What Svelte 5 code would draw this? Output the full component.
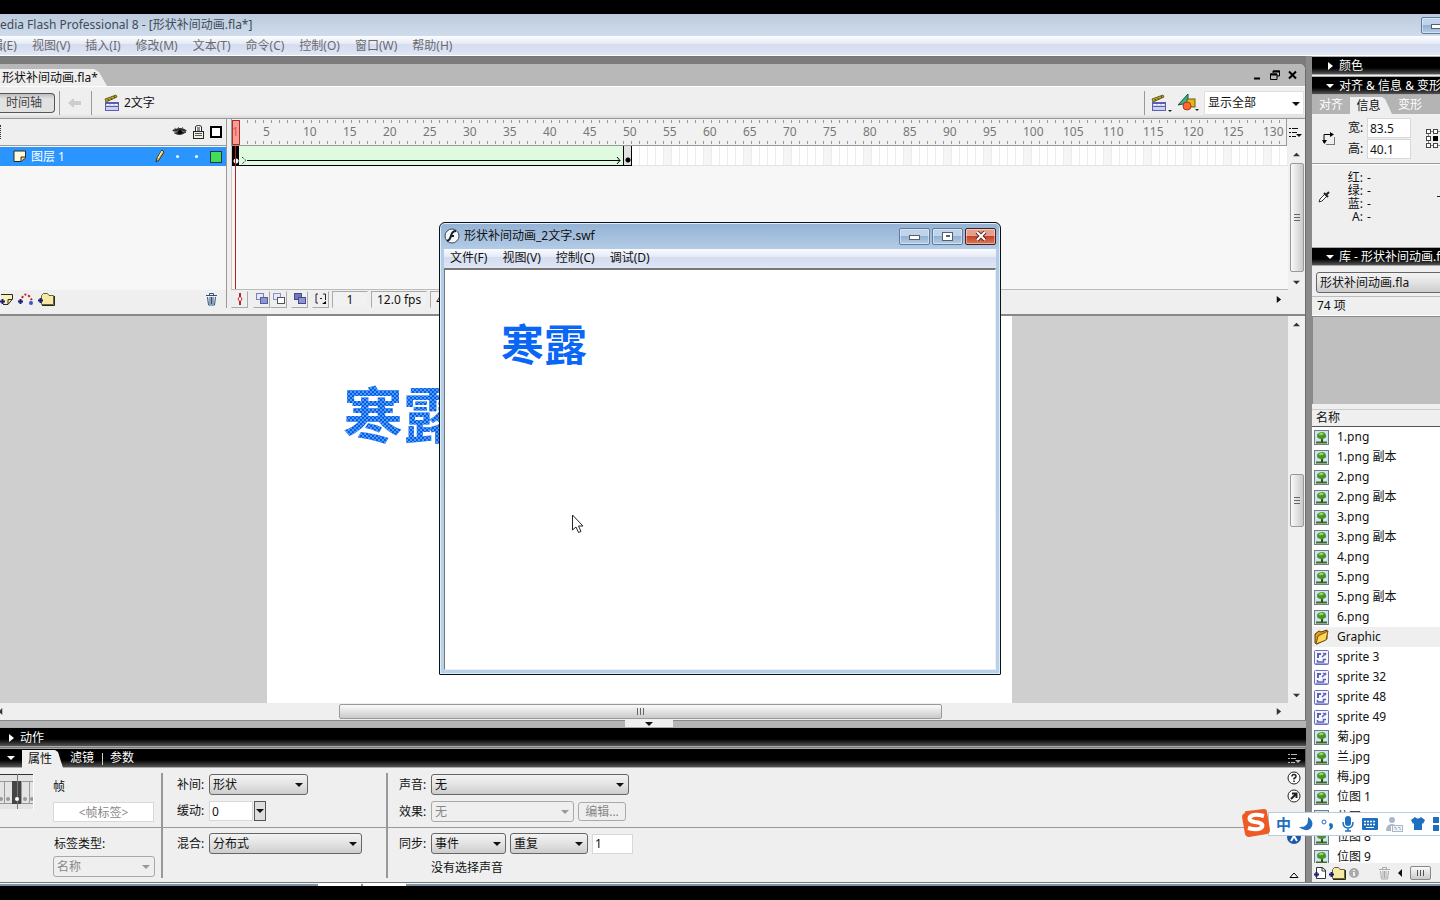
<!-- Flash authoring workspace: timeline, stage, property inspector and library,
     with the test-movie window floating over the stage. -->
<script lang="ts">
  const menus = ["辑(E)", "视图(V)", "插入(I)", "修改(M)", "文本(T)", "命令(C)", "控制(O)", "窗口(W)", "帮助(H)"];
  const movieMenus = ["文件(F)", "视图(V)", "控制(C)", "调试(D)"];
  const rulerMarks = Array.from({ length: 26 }, (_, i) => (i + 1) * 5);

  type Item = { name: string; kind: "bitmap" | "folder" | "graphic" };
  const bitmap = (name: string): Item => ({ name, kind: "bitmap" });
  const graphic = (name: string): Item => ({ name, kind: "graphic" });

  const items: Item[] = [
    ...["1.png", "1.png 副本", "2.png", "2.png 副本", "3.png", "3.png 副本", "4.png", "5.png", "5.png 副本", "6.png"].map(bitmap),
    { name: "Graphic", kind: "folder" },
    ...["sprite 3", "sprite 32", "sprite 48", "sprite 49"].map(graphic),
    ...["菊.jpg", "兰.jpg", "梅.jpg", "位图 1", "位图 7", "位图 8", "位图 9"].map(bitmap),
  ];

  const channels = ["红:", "绿:", "蓝:", "A:"];

  let frameLabel = $state("<帧标签>");
  let ease = $state("0");
  let loops = $state("1");
  let objWidth = $state("83.5");
  let objHeight = $state("40.1");
</script>

{#snippet tri(dir: string)}
  <svg class="tri" width="8" height="8" viewBox="0 0 8 8" aria-hidden="true">
    {#if dir === "up"}<path d="M0 6L4 2L8 6Z" />
    {:else if dir === "down"}<path d="M0 2L4 6L8 2Z" />
    {:else if dir === "left"}<path d="M6 0L2 4L6 8Z" />
    {:else}<path d="M2 0L7 4L2 8Z" />{/if}
  </svg>
{/snippet}

{#snippet clapper()}
  <svg width="16" height="18" viewBox="0 0 16 18" aria-hidden="true">
    <path d="M1 5L12 1L13 3L2 8Z" fill="#b5a32a" stroke="#6b641f" />
    <path d="M4 5l1 2M7 4l1 2M10 2l1 2" stroke="#4d4818" />
    <rect x="1.500" y="8.500" width="13" height="8" fill="#cdd2f3" stroke="#5a5fae" />
    <path d="M1 9.500H15M1 12.500H15" stroke="#5a5fae" />
    <path d="M3 10.500h2M7 10.500h2M11 10.500h2" stroke="#fff" />
  </svg>
{/snippet}

{#snippet listIcon()}
  <svg width="13" height="11" viewBox="0 0 13 11" aria-hidden="true">
    <path d="M0 1.500h2M0 5.500h2M0 9.500h2M3 1.500h6M3 5.500h5M3 9.500h4" stroke="currentColor" />
    <path d="M7 7h6l-3 3z" fill="currentColor" />
  </svg>
{/snippet}

{#snippet plus()}
  <path d="M0 8.500h5M2.500 6v5" stroke="#1d1f7c" stroke-width="2" />
{/snippet}

{#snippet folder()}
  <svg width="17" height="14" viewBox="0 0 17 14" aria-hidden="true">
    <path d="M3.500 12.500V3.500L5.500 1.500H9.500L11 3.500H15.500V12.500Z" fill="#f6e9a4" stroke="#6b6238" />
    <path d="M4 13.500H16.500V4" fill="none" stroke="#2a2717" />
    {@render plus()}
  </svg>
{/snippet}

{#snippet trash()}
  <svg width="13" height="14" viewBox="0 0 13 14" aria-hidden="true">
    <path d="M1 3.500H12M4.500 3V1.500H8.500V3M2.500 5L3.500 13H9.500L10.500 5M5 5V12M6.500 5V12M8 5V12" fill="none" stroke="currentColor" />
  </svg>
{/snippet}

<div class="screen">
  <header class="titlebar">
    <h1>edia Flash Professional 8 - [形状补间动画.fla*]</h1>
    <button class="aero main-min" aria-label="最小化"><i class="dash"></i></button>
  </header>
  <nav class="menubar">
    {#each menus as menu}<button>{menu}</button>{/each}
  </nav>

  <div class="workspace">
    <main class="left">
      <section class="document">
        <div class="doc-tabs">
          <button class="doc-tab">形状补间动画.fla*</button>
          <div class="doc-buttons">
            <button aria-label="最小化文档"><svg width="9" height="10" viewBox="0 0 9 10"><path d="M1 8.500H7" stroke="#000" stroke-width="2" /></svg></button>
            <button aria-label="还原文档"><svg width="10" height="10" viewBox="0 0 10 10"><path d="M3 3V1H9.500V6H7M.5 4H7V9.500H.5Z" fill="none" stroke="#000" /><path d="M3 1.500H10M0 4.500H7" stroke="#000" stroke-width="2" /></svg></button>
            <button aria-label="关闭文档"><svg width="9" height="10" viewBox="0 0 9 10"><path d="M1 1.500L8 8.500M8 1.500L1 8.500" stroke="#000" stroke-width="2" /></svg></button>
          </div>
        </div>

        <div class="scene-bar">
          <button class="timeline-toggle">时间轴</button>
          <i class="bar-sep"></i>
          <button class="back" aria-label="返回" disabled>
            <svg width="14" height="12" viewBox="0 0 14 12"><path d="M0 6L6 1V4H13V8H6V11Z" fill="#ccc" /></svg>
          </button>
          <i class="bar-sep"></i>
          <span class="scene-name">{@render clapper()}2文字</span>
          <div class="scene-tools">
            <i class="bar-sep"></i>
            <button aria-label="编辑场景">{@render clapper()}<i class="mini"></i></button>
            <button aria-label="编辑元件">
              <svg width="18" height="17" viewBox="0 0 18 17"><path d="M0 11L10 0V9Z" fill="#35b38e" stroke="#17583f" /><rect x="9" y="5" width="8" height="8" fill="#e3b71b" stroke="#6e5a10" /><circle cx="9" cy="12" r="4" fill="#ff6a32" stroke="#a93a12" /></svg><i class="mini"></i>
            </button>
            <div class="drop zoom">
              <select aria-label="缩放"><option>显示全部</option></select>
            </div>
          </div>
        </div>

        <div class="timeline">
          <div class="layers">
            <div class="layer-head">
              <i class="grip"></i>
              <svg width="15" height="10" viewBox="0 0 15 10"><path d="M0 4C3 1 11 -1 15 4L13 4C15 5 14 6 13 6C9 9 4 8 2 6L5 5Z" fill="#2b2b2b" /><path d="M1 3L4 1M6 1L7 0M10 1L11 0M2 6Q7 2 13 5" stroke="#777" fill="none" /><circle cx="8" cy="5" r="2" /></svg>
              <svg width="11" height="14" viewBox="0 0 11 14"><path d="M2.500 6V2Q2.500 .5 5.500 .5T8.500 2V6" fill="#fff" stroke="#222" /><path d="M4 3h3M4 5h3" stroke="#222" /><rect x=".5" y="6.500" width="10" height="7" fill="#f2f2d6" stroke="#222" /><path d="M2 8.500h7M2 10.500h7" stroke="#458" /></svg>
              <i class="outline-box"></i>
            </div>
            <div class="layer">
              <svg class="layer-icon" width="14" height="13" viewBox="0 0 14 13"><path d="M1 1H12.500V8L8 11.500H1Z" fill="#fffbe0" stroke="#2c2a1c" /><path d="M12.500 7H8V11.500" fill="#e7cf72" stroke="#2c2a1c" /></svg>
              <span>图层 1</span>
              <svg class="pencil" width="10" height="15" viewBox="0 0 10 15"><path d="M1 13L2 9L7 1L9 3L4 11Z" fill="#f0c64c" stroke="#3d3013" /><path d="M3 9L7 2" stroke="#fff8cf" /></svg>
              <b></b><b></b>
              <i class="swatch"></i>
            </div>
            <div class="layer-foot">
              <button aria-label="插入图层"><svg width="14" height="13" viewBox="0 0 14 13"><path d="M1 1.500H12.500V6L8 11.500H3" fill="#f9efb9" stroke="#2c2a1c" /><path d="M12 6.500H8V11" fill="none" stroke="#2c2a1c" />{@render plus()}</svg></button>
              <button aria-label="添加运动引导层"><svg width="16" height="13" viewBox="0 0 16 13"><path d="M4 5Q7 -1 11 3T13 10" fill="none" stroke="#c22127" stroke-width="2" stroke-dasharray="2 2" /><circle cx="13" cy="10" r="2" fill="#3058c8" />{@render plus()}</svg></button>
              <button aria-label="插入图层文件夹">{@render folder()}</button>
              <button class="delete" aria-label="删除图层">{@render trash()}</button>
            </div>
          </div>

          <div class="frames">
            <div class="ruler-row">
              <div class="ruler">
                <span class="first">1</span>
                {#each rulerMarks as mark}<span>{mark}</span>{/each}
                <i class="playhead"></i>
              </div>
              <button class="list-btn" aria-label="帧视图">{@render listIcon()}</button>
            </div>
            <div class="track-area">
              <div class="tracks">
                <div class="track">
                  <i class="key-start"></i>
                  <div class="tween">
                    <svg class="tail" width="5" height="7" viewBox="0 0 5 7"><path d="M0 0L4 3.500L0 7" fill="none" stroke="#000" stroke-dasharray="1 1" /></svg>
                    <i class="shaft"></i>
                    <svg class="tail" width="5" height="7" viewBox="0 0 5 7"><path d="M1 0L4 3.500L1 7" fill="none" stroke="#000" /></svg>
                  </div>
                  <i class="key-end"></i>
                  <div class="empty-frames"></div>
                </div>
                <i class="playline"></i>
              </div>
              <div class="vscroll">
                {@render tri("up")}
                <i class="vthumb timeline-thumb"></i>
                {@render tri("down")}
              </div>
            </div>
            <div class="frame-foot">
              <button aria-label="帧居中"><svg width="8" height="14" viewBox="0 0 8 14"><path d="M4 1V13" stroke="#c22127" stroke-width="2" /><path d="M4 4L6 7L4 10L2 7Z" fill="#fff" stroke="#c22127" /></svg></button>
              <button class="g1" aria-label="绘图纸外观"><svg width="12" height="12" viewBox="0 0 12 12"><rect x=".5" y=".5" width="7" height="6" fill="#e6e8fb" stroke="#7a7fb8" /><rect x="4.500" y="4.500" width="7" height="6" fill="#8f95d2" stroke="#555a9c" /></svg></button>
              <button aria-label="绘图纸外观轮廓"><svg width="12" height="12" viewBox="0 0 12 12"><rect x=".5" y=".5" width="7" height="6" fill="#e6e8fb" stroke="#8f93c0" /><rect x="4.500" y="4.500" width="7" height="6" fill="#fff" stroke="#555" /></svg></button>
              <button class="g2" aria-label="编辑多个帧"><svg width="12" height="12" viewBox="0 0 12 12"><rect x=".5" y=".5" width="7" height="6" fill="#7278bd" stroke="#454a8c" /><rect x="4.500" y="4.500" width="7" height="6" fill="#8f95d2" stroke="#454a8c" /></svg></button>
              <button class="g2" aria-label="修改绘图纸标记"><svg width="12" height="12" viewBox="0 0 12 12"><path d="M3 1H1V10H3M8 1H10.500V7M5 5.500H7" fill="none" stroke="#222" /><path d="M11 8V11H7Z" /></svg></button>
              <span class="cell frame-no">1</span>
              <span class="cell">12.0 fps</span>
              <span class="cell time">4.1s</span>
              <div class="frame-scroll">{@render tri("right")}</div>
            </div>
          </div>
        </div>

        <div class="stage-row">
          <div class="pasteboard">
            <div class="stage"><span class="shape-text">寒露</span></div>
          </div>
          <div class="vscroll">
            {@render tri("up")}
            <i class="vthumb stage-thumb"></i>
            {@render tri("down")}
          </div>
        </div>
        <div class="hscroll">
          {@render tri("left")}
          <i class="hthumb"></i>
          {@render tri("right")}
        </div>
      </section>

      <div class="splitter"><button aria-label="折叠面板">{@render tri("down")}</button></div>

      <div class="panel-bar actions-bar">{@render tri("right")}<span>动作</span></div>

      <section class="properties">
        <div class="panel-bar prop-bar">
          {@render tri("down")}
          <button class="prop-tab">属性</button>
          <button>滤镜</button>
          <i></i>
          <button>参数</button>
          <span class="prop-menu">{@render listIcon()}</span>
        </div>
        <div class="prop-body">
          <div class="prop-cell frame-cell">
            <svg width="34" height="36" viewBox="0 0 34 36" aria-hidden="true">
              <rect width="33" height="35" fill="#e4e4e4" /><path d="M0 .5H33" stroke="#333" />
              <path d="M0 7.500H33M0 29.500H33M4.500 7V30M21.500 7V30M29.500 7V30" stroke="#999" />
              <rect x="12" y="7" width="9" height="23" fill="#444" /><path d="M17.500 0V35" stroke="#777" />
              <g fill="#999"><circle cx="1" cy="25" r="2" /><circle cx="8" cy="25" r="2" /><circle cx="25" cy="25" r="2" /><circle cx="32" cy="25" r="2" /></g><circle cx="17" cy="25" r="2" fill="#fff" />
              <path d="M33.500 0V36" stroke="#fff" />
            </svg>
            <div class="stack">
              <label for="frame-label">帧</label>
              <input id="frame-label" class="frame-label" bind:value={frameLabel} />
            </div>
          </div>
          <div class="prop-cell tween-cell">
            <div class="line">
              <label for="tween">补间:</label>
              <div class="drop w98"><select id="tween"><option>形状</option></select></div>
            </div>
            <div class="line">
              <label for="ease">缓动:</label>
              <input id="ease" class="ease" bind:value={ease} />
              <button class="step" aria-label="缓动滑块">{@render tri("down")}</button>
            </div>
          </div>
          <div class="prop-cell sound-cell">
            <div class="line">
              <label for="sound">声音:</label>
              <div class="drop w198"><select id="sound"><option>无</option></select></div>
            </div>
            <div class="line">
              <label for="effect">效果:</label>
              <div class="drop off w143"><select id="effect" disabled><option>无</option></select></div>
              <button class="edit" disabled>编辑...</button>
            </div>
          </div>
          <div class="prop-cell type-cell">
            <label for="label-type">标签类型:</label>
            <div class="drop off w102"><select id="label-type" disabled><option>名称</option></select></div>
          </div>
          <div class="prop-cell tween-cell">
            <div class="line">
              <label for="blend">混合:</label>
              <div class="drop w153"><select id="blend"><option>分布式</option></select></div>
            </div>
          </div>
          <div class="prop-cell sound-cell">
            <div class="line">
              <label for="sync">同步:</label>
              <div class="drop w75"><select id="sync"><option>事件</option></select></div>
              <div class="drop w78"><select aria-label="循环方式"><option>重复</option></select></div>
              <input class="loops" aria-label="循环次数" bind:value={loops} />
            </div>
            <p>没有选择声音</p>
          </div>
          <div class="prop-icons">
            <svg width="14" height="14" viewBox="0 0 14 14"><circle cx="7" cy="7" r="6" fill="#fff" stroke="#222" /><path d="M5 5.500Q5 3.500 7 3.500T9 5.500Q9 6.500 7 7.500V8.500M7 9.500V11" fill="none" stroke="#222" stroke-width="1.500" /></svg>
            <svg width="14" height="14" viewBox="0 0 14 14"><circle cx="7" cy="7" r="6" fill="#fff" stroke="#222" /><path d="M4 10L9 5M5 4.500H9.500V9" fill="none" stroke="#222" stroke-width="2" /></svg>
            <svg class="a11y" width="14" height="14" viewBox="0 0 14 14"><circle cx="7" cy="7" r="7" fill="#1c58a8" /><path d="M4 11L7 6L10 11M3 5H11" fill="none" stroke="#fff" stroke-width="2" /></svg>
            <svg class="expand" width="10" height="6" viewBox="0 0 10 6"><path d="M1 5.500L5 1L9 5.500Z" fill="#fff" stroke="#000" /></svg>
          </div>
        </div>
      </section>
    </main>

    <aside class="right">
      <div class="panel-bar dock-bar first-bar">{@render tri("right")}<span>颜色</span></div>
      <div class="panel-bar dock-bar">{@render tri("down")}<span>对齐 &amp; 信息 &amp; 变形</span></div>
      <div class="info-tabs">
        <button>对齐</button><button class="on">信息</button><button>变形</button>
      </div>
      <div class="info-size">
        <svg width="14" height="15" viewBox="0 0 14 15" aria-hidden="true"><path d="M2 12V3.500H10" fill="none" stroke="#000" /><path d="M0 9H5L2.500 13ZM8 1V6L12 3.500Z" /><path d="M4.500 13.500H12.500V6" fill="none" stroke="#000" stroke-dasharray="1 1" /></svg>
        <div class="fields">
          <label for="obj-w">宽:</label><input id="obj-w" bind:value={objWidth} />
          <label for="obj-h">高:</label><input id="obj-h" bind:value={objHeight} />
        </div>
        <svg class="anchor" width="20" height="20" viewBox="0 0 20 20" aria-hidden="true"><path d="M4 2.500H16M4 16.500H16M2.500 4V16" stroke="#888" /><g fill="#fff" stroke="#444"><rect x=".5" y=".5" width="4" height="4" /><rect x="7.500" y=".5" width="4" height="4" /><rect x="14.500" y=".5" width="4" height="4" /><rect x=".5" y="7.500" width="4" height="4" /><rect x=".5" y="14.500" width="4" height="4" /><rect x="7.500" y="14.500" width="4" height="4" /><rect x="14.500" y="14.500" width="4" height="4" /></g><rect x="7" y="7" width="5" height="5" /></svg>
      </div>
      <div class="info-color">
        <svg width="12" height="12" viewBox="0 0 12 12" aria-hidden="true"><path d="M1 11L2 8L7 3L9 5L4 10Z" fill="#fff" stroke="#333" /><path d="M6 2L10 6M8 4L11 1" stroke="#222" stroke-width="2" /></svg>
        <dl>
          {#each channels as channel}<dt>{channel}</dt><dd>-</dd>{/each}
        </dl>
        <svg class="cross" width="9" height="9" viewBox="0 0 9 9" aria-hidden="true"><path d="M0 4.500H9M4.500 0V9" stroke="#222" /></svg>
      </div>
      <div class="panel-bar dock-bar">{@render tri("down")}<span>库 - 形状补间动画.fla</span></div>
      <div class="lib-select"><div class="drop"><select aria-label="库文件"><option>形状补间动画.fla</option></select></div></div>
      <div class="lib-count">74 项</div>
      <div class="preview"></div>
      <div class="lib-head">名称</div>
      <ul class="lib-list">
        {#each items as item}
          <li class:selected={item.kind === "folder"}>
            {#if item.kind === "bitmap"}
              <svg width="15" height="15" viewBox="0 0 15 15"><rect x=".5" y=".5" width="14" height="14" fill="#cfe5f3" stroke="#6f7d86" /><path d="M2 12.500H13" stroke="#3f6e1e" stroke-width="2" /><path d="M7 8H9V12H7Z" fill="#4b3d18" /><path d="M3 6Q3 3 6 2.500Q10 1 11.500 4Q13 7 11 8L8 9.500L5 8.500Q3 8 3 6Z" fill="#4b9426" /><path d="M5.500 5Q7 3 9 4.500" stroke="#a4d86c" stroke-width="2" fill="none" /></svg>
            {:else if item.kind === "folder"}
              <svg width="15" height="16" viewBox="0 0 15 16"><path d="M1 5L5 2L7 3L13 1V10L3 15L1 14Z" fill="#e09a1e" stroke="#5e3e0c" /><path d="M4 7L14 2L12 11L2 15Z" fill="#ffd75a" stroke="#7a5210" /></svg>
            {:else}
              <svg width="15" height="15" viewBox="0 0 15 15"><rect x=".5" y=".5" width="14" height="14" rx="1" fill="#f4f5ff" stroke="#6a6fc0" /><path d="M3 3H7V5H5V8H3Z" fill="#5c61b4" /><path d="M9 3L12 5M12 3L8 7" stroke="#5c61b4" stroke-width="1.500" /><path d="M3.500 10V12H9.500V9.500H12" fill="none" stroke="#5c61b4" stroke-width="1.500" /><path d="M1 13.500H14" stroke="#9da1dd" /></svg>
            {/if}
            <span>{item.name}</span>
          </li>
        {/each}
      </ul>
      <div class="lib-foot">
        <button aria-label="新建元件"><svg width="12" height="13" viewBox="0 0 12 13"><path d="M2.500 1.500H8L11.500 4V12.500H2.500Z" fill="#fff" stroke="#333" /><path d="M8 1V5H11" fill="none" stroke="#333" />{@render plus()}</svg></button>
        <button aria-label="新建文件夹">{@render folder()}</button>
        <button aria-label="属性" disabled><svg width="10" height="12" viewBox="0 0 10 12"><circle cx="5" cy="6" r="5" fill="#aaa" /><path d="M5 5V9M5 3V4" stroke="#eee" stroke-width="2" /></svg></button>
        <button class="lib-trash" aria-label="删除" disabled>{@render trash()}</button>
        {@render tri("left")}
        <i class="lib-thumb"></i>
      </div>
    </aside>
  </div>
  <footer class="taskbar"><i></i><i></i></footer>

  <section class="movie">
    <header class="movie-title">
      <svg width="16" height="16" viewBox="0 0 16 16" aria-hidden="true"><circle cx="8" cy="8" r="7" fill="#f4f6f8" stroke="#3b4856" /><path d="M12 3Q8 3 7 8Q6 12 3 13M6 8H10" fill="none" stroke="#16202e" stroke-width="2" /></svg>
      <h2>形状补间动画_2文字.swf</h2>
      <button class="aero" aria-label="最小化"><i class="dash"></i></button>
      <button class="aero" aria-label="最大化"><i class="box"></i></button>
      <button class="aero close" aria-label="关闭"><svg width="12" height="10" viewBox="0 0 12 10"><path d="M2 1L10 9M10 1L2 9" stroke="#5a2a26" stroke-width="4" /><path d="M2 1L10 9M10 1L2 9" stroke="#fff" stroke-width="2" /></svg></button>
    </header>
    <nav class="movie-menu">
      {#each movieMenus as menu}<button>{menu}</button>{/each}
    </nav>
    <div class="movie-stage">
      <span>寒露</span>
      <svg class="cursor" width="12" height="20" viewBox="0 0 12 20" aria-hidden="true"><path d="M.5 1V16L4 13L6.500 18.500L9 17.500L6.500 12H11Z" fill="#fff" stroke="#222" /></svg>
    </div>
  </section>

  <div class="ime">
    <svg class="sogou" width="28" height="28" viewBox="0 0 28 28" aria-hidden="true"><path d="M3 4Q2 2 5 2L22 0Q25 0 25 3L28 21Q28 24 25 25L7 28Q4 28 3 25L0 8Q0 5 3 4Z" fill="#ee5a24" /><path d="M22 7Q11 4 8 8Q6 12 13 13Q22 14 20 18Q17 22 6 19" fill="none" stroke="#fff" stroke-width="4" /></svg>
    <button class="zh">中</button>
    <button aria-label="半角"><svg width="14" height="14" viewBox="0 0 14 14"><path d="M9 0Q16 5 12 11Q7 16 0 10Q10 11 9 0Z" /></svg></button>
    <button aria-label="标点"><svg width="13" height="14" viewBox="0 0 13 14"><circle cx="3" cy="5" r="2" fill="none" stroke="#1e6fc0" /><path d="M9 6Q12 6 12 9T8 13L9 10Q7 8 9 6Z" /></svg></button>
    <button aria-label="语音"><svg width="12" height="16" viewBox="0 0 12 16"><rect x="3" y="0" width="6" height="10" rx="3" /><path d="M1 6Q1 12 6 12T11 6M6 12V15M3 15H9" fill="none" stroke="#1e6fc0" stroke-width="1.500" /></svg></button>
    <button aria-label="软键盘"><svg width="16" height="13" viewBox="0 0 16 13"><rect width="16" height="12" rx="1" /><path d="M2 3.500H14M2 6.500H14" stroke="#fff" stroke-width="1.500" stroke-dasharray="2 1" /><path d="M4 9.500H12" stroke="#fff" /></svg></button>
    <button aria-label="账号"><svg width="17" height="15" viewBox="0 0 17 15"><g fill="#a9b9c8"><circle cx="6" cy="3" r="3" /><path d="M0 14Q0 7 6 7Q9 7 10 9H5V14Z" /></g><rect x="6.500" y="8.500" width="10" height="6" fill="#eef2f6" stroke="#a9b9c8" /><path d="M8 10.500H10V12.500H11M12 10.500H14V12.500H15" fill="none" stroke="#a9b9c8" /></svg></button>
    <button aria-label="皮肤"><svg width="14" height="14" viewBox="0 0 14 14"><path d="M4 0Q7 3 10 0L14 3L12 7L11 6V13H3V6L2 7L0 3Z" /></svg></button>
    <button aria-label="工具箱"><svg width="14" height="14" viewBox="0 0 14 14"><path d="M0 0H6V6H0ZM8 0H14V6H8ZM0 8H6V14H0ZM8 8H14V14H8Z" /></svg></button>
  </div>
</div>

<style>
  :global(body) {
    margin: 0;
  }
  .screen {
    position: relative;
    display: flex;
    flex-direction: column;
    height: 100vh;
    padding-top: 14px;
    box-sizing: border-box;
    overflow: hidden;
    background: #000;
    color: #111;
    font: 12px/16px "Noto Sans", "Noto Sans CJK SC", sans-serif;
  }
  .screen :global(*) {
    box-sizing: border-box;
  }
  button,
  input,
  select {
    font: inherit;
    color: inherit;
    margin: 0;
  }
  button {
    padding: 0;
    border: 0;
    background: none;
    white-space: nowrap;
  }
  svg {
    flex: none;
    display: block;
  }
  i {
    flex: none;
    font-style: normal;
  }
  .tri {
    fill: currentColor;
  }

  /* application frame */
  .titlebar {
    display: flex;
    align-items: center;
    justify-content: space-between;
    height: 22px;
    flex: none;
    background: linear-gradient(#bccbdd, #cfdcec);
    color: #3f4b58;
  }
  h1,
  h2 {
    margin: 0;
    font-size: 12px;
    font-weight: 400;
    white-space: nowrap;
  }
  .aero {
    display: flex;
    align-items: center;
    justify-content: center;
    width: 31px;
    height: 17px;
    border: 1px solid #5f7b9c;
    border-radius: 2px;
    background: linear-gradient(#bfd3ea 45%, #93b1d2 50%, #b5cde6);
    box-shadow: inset 0 0 0 1px #ffffff70;
  }
  .main-min {
    margin-right: -12px;
  }
  .dash {
    width: 11px;
    height: 5px;
    margin-top: 3px;
    border: 1px solid #55606c;
    background: #fff;
  }
  .box {
    width: 11px;
    height: 9px;
    border: 1px solid #55606c;
    background: linear-gradient(#55606c, #55606c) center / 4px 2px no-repeat #fff;
  }
  .menubar {
    display: flex;
    gap: 15px;
    height: 20px;
    flex: none;
    background: linear-gradient(#fcfdff, #e6ebf6 40%, #d5dcef 45%, #dfe6f5);
    border-bottom: 1px solid #fff;
    color: #6a6a6e;
  }
  .menubar button:first-child {
    margin-left: -9px;
  }
  .workspace {
    flex: 1;
    min-height: 0;
    display: grid;
    grid-template-columns: minmax(0, 1fr) 128px;
    column-gap: 6px;
    background: linear-gradient(90deg, #6f6f6f, #8d8d8d);
  }
  .left,
  .right {
    display: flex;
    flex-direction: column;
    min-width: 0;
    min-height: 0;
    overflow: hidden;
  }
  .left {
    padding-top: 7px;
    border-top: 1px solid #777;
    background: #7c7c7c;
  }
  .right {
    background: #efefef;
  }
  .taskbar {
    display: flex;
    flex: none;
    gap: 2px;
    height: 18px;
    padding-left: 318px;
    border-top: 1px solid #777;
    background: linear-gradient(#f4f8fb 1px, #7f93a5 1px 3px, #000 3px);
  }
  .taskbar i {
    width: 43px;
    height: 3px;
    background: #fff;
  }

  /* document window */
  .document {
    flex: 1;
    min-height: 0;
    display: flex;
    flex-direction: column;
    border-right: 1px solid #6b6b6b;
    border-radius: 0 6px 0 0;
    overflow: hidden;
    background: #efefef;
  }
  .doc-tabs {
    display: flex;
    justify-content: space-between;
    height: 22px;
    flex: none;
    background: #b8b8b8;
  }
  .doc-tab {
    align-self: flex-end;
    width: 107px;
    height: 17px;
    padding-left: 2px;
    text-align: left;
    background: #efefef;
    clip-path: polygon(0 0, 94px 0, 99px 3px, 107px 100%, 0 100%);
  }
  .doc-buttons {
    display: flex;
    align-items: center;
    gap: 8px;
    padding-right: 8px;
  }
  .scene-bar {
    display: flex;
    align-items: center;
    height: 33px;
    flex: none;
    border-top: 1px solid #fff;
    border-bottom: 1px solid #999;
    background: linear-gradient(#efefef 27px, #d9d9d9);
  }
  .timeline-toggle {
    width: 55px;
    height: 20px;
    padding-right: 6px;
    border: 1px solid #555;
    border-left: 0;
    border-radius: 0 4px 4px 0;
    background: linear-gradient(#bdbdbd, #e2e2e2 5px);
    color: #444;
  }
  .bar-sep {
    width: 1px;
    height: 24px;
    margin-left: 4px;
    background: #999;
  }
  .back {
    margin: 0 5px 0 8px;
  }
  .scene-name {
    display: flex;
    align-items: center;
    gap: 4px;
    margin-left: 12px;
  }
  .scene-tools {
    display: flex;
    align-items: center;
    margin-left: auto;
    padding-right: 1px;
  }
  .scene-tools button {
    position: relative;
    width: 21px;
    margin-left: 6px;
  }
  .mini {
    position: absolute;
    right: 0;
    bottom: 0;
    border: 2px solid transparent;
    border-top-color: #222;
    border-bottom: 0;
  }

  /* drop-downs */
  .drop {
    position: relative;
    height: 21px;
    flex: none;
    border: 1px solid #666;
    border-radius: 3px;
    background: linear-gradient(#f3f3f3, #e3e3e3 50%, #cdcdcd);
  }
  .drop::after {
    content: "";
    position: absolute;
    top: 8px;
    right: 4px;
    border: 4px solid transparent;
    border-top-color: currentColor;
    border-bottom: 0;
    pointer-events: none;
  }
  .drop select {
    display: block;
    appearance: none;
    width: 100%;
    height: 100%;
    padding: 0 16px 0 3px;
    border: 0;
    background: none;
  }
  .off {
    border-color: #aaa;
    background: #efefef;
    color: #999;
  }
  .off select,
  .edit {
    opacity: 1;
    color: #888;
  }
  .zoom {
    width: 100px;
    height: 24px;
    margin-left: 5px;
    border-color: #e0e0e0;
    border-radius: 0;
    background: #fff;
  }
  .zoom::after {
    top: 10px;
    right: 3px;
  }
  .w75 { width: 75px; }
  .w78 { width: 78px; }
  .w98 { width: 99px; }
  .w102 { width: 102px; }
  .w143 { width: 143px; }
  .w153 { width: 153px; }
  .w198 { width: 198px; }

  /* timeline */
  .timeline {
    display: grid;
    grid-template-columns: 227px minmax(0, 1fr);
    height: 197px;
    flex: none;
    padding-bottom: 6px;
    border-bottom: 2px solid #888;
  }
  .layers {
    display: flex;
    flex-direction: column;
    border-right: 1px solid #999;
    background: #f7f7f7;
  }
  .layer-head {
    display: flex;
    align-items: center;
    gap: 6px;
    height: 27px;
    padding-right: 4px;
    border-bottom: 1px solid #999;
    background: #efefef;
  }
  .grip {
    width: 1px;
    height: 14px;
    margin-right: auto;
    border-left: 1px dotted #333;
  }
  .outline-box,
  .swatch {
    width: 12px;
    height: 12px;
    border: 2px solid #000;
    background: #fff;
  }
  .layer {
    display: flex;
    align-items: center;
    height: 19px;
    margin-top: 1px;
    padding: 0 4px 0 13px;
    background: #2a94ff;
    color: #fff;
  }
  .layer span {
    margin: 0 auto 0 4px;
  }
  .layer b {
    width: 3px;
    height: 3px;
    margin-left: 16px;
    border-radius: 50%;
    background: #fff;
  }
  .layer b:nth-of-type(1) {
    margin-left: 11px;
  }
  .swatch {
    margin-left: 12px;
    border: 1px solid #234;
    background: #43dc57;
  }
  .layer-foot {
    display: flex;
    align-items: center;
    gap: 4px;
    height: 18px;
    margin-top: auto;
    padding-right: 8px;
    background: #efefef;
  }
  .delete {
    margin-left: auto;
    color: #30507c;
  }
  .frames {
    display: flex;
    flex-direction: column;
    padding-left: 4px;
  }
  .ruler-row {
    display: flex;
    height: 27px;
  }
  .ruler {
    position: relative;
    display: flex;
    align-items: center;
    flex: 1;
    min-width: 0;
    overflow: hidden;
    border: 1px solid #999;
    border-width: 0 1px 1px;
    color: #777;
    background:
      repeating-linear-gradient(90deg, #999 0 1px, transparent 1px 8px) 7px 1px / 100% 3px no-repeat,
      repeating-linear-gradient(90deg, #999 0 1px, transparent 1px 8px) 7px 22px / 100% 3px no-repeat,
      #f1f1f1;
  }
  .ruler span {
    flex: none;
    width: 40px;
  }
  .ruler .first {
    width: 31px;
    color: #b5443c;
  }
  .playhead {
    position: absolute;
    left: 0;
    top: 1px;
    width: 8px;
    height: 25px;
    border: 1px solid #b52a22;
    background: #f4604f90;
  }
  .list-btn {
    width: 18px;
    display: flex;
    align-items: center;
    padding-left: 2px;
  }
  .track-area {
    display: flex;
    flex: 1;
    min-height: 0;
  }
  .tracks {
    position: relative;
    flex: 1;
    background: #f7f7f7;
    border-left: 1px solid #ccc;
    border-bottom: 1px solid #bbb;
  }
  .track {
    display: flex;
    height: 20px;
  }
  .key-start {
    width: 7px;
    background: radial-gradient(circle at 4px 15px, #fff 2px, #000 3px);
  }
  .tween {
    display: flex;
    align-items: flex-end;
    width: 384px;
    padding: 0 2px 1px 3px;
    border-bottom: 1px solid #000;
    background: #e0fae0;
  }
  .shaft {
    flex: 1;
    height: 1px;
    margin: 0 -4px 3px 0;
    background: #000;
  }
  .key-end {
    width: 9px;
    border: 1px solid #000;
    border-top: 0;
    background: radial-gradient(circle at 4px 14px, #000 2px, transparent 3px), #e2e2e2;
  }
  .empty-frames {
    flex: 1;
    border-bottom: 1px solid #e4e4e4;
    background:
      repeating-linear-gradient(90deg, transparent 0 7px, #ececec 7px 8px),
      repeating-linear-gradient(90deg, #fff 0 32px, #f5f5f5 32px 40px);
  }
  .playline {
    position: absolute;
    top: 0;
    bottom: 0;
    left: 3px;
    width: 1px;
    background: #b02020;
  }
  .vscroll {
    display: flex;
    flex-direction: column;
    align-items: center;
    width: 17px;
    padding: 5px 0 4px;
    background: #f0f0f0;
    color: #333;
  }
  .vscroll .tri,
  .frame-scroll .tri,
  .hscroll .tri {
    width: 7px;
    height: 7px;
  }
  .vthumb {
    position: relative;
    width: 14px;
    border: 1px solid #999;
    border-radius: 2px;
    background:
      repeating-linear-gradient(#666 0 1px, transparent 1px 3px) center / 6px 7px no-repeat,
      linear-gradient(90deg, #fafafa, #cacaca);
  }
  .timeline-thumb {
    flex: 1;
    margin: 5px 0 7px;
  }
  .frame-foot {
    display: flex;
    align-items: center;
    height: 18px;
    background: #efefef;
  }
  .frame-foot button {
    display: flex;
    align-items: center;
    justify-content: center;
    width: 17px;
    height: 17px;
    border: 1px solid #aaa;
    border-top-color: #eee;
    border-left-color: #eee;
  }
  .frame-foot .g1 {
    margin-left: 5px;
  }
  .frame-foot .g2 {
    margin-left: 4px;
  }
  .cell {
    height: 17px;
    margin-left: 3px;
    padding: 0 5px;
    border: 1px solid #aaa;
    border-bottom-color: #eee;
    border-right-color: #eee;
    background: #f1f1f1;
    white-space: nowrap;
  }
  .frame-no {
    width: 36px;
    text-align: center;
  }
  .time {
    width: 50px;
  }
  .frame-scroll {
    display: flex;
    flex: 1;
    align-items: center;
    justify-content: flex-end;
    padding-right: 23px;
  }

  /* stage */
  .stage-row {
    display: flex;
    flex: 1;
    min-height: 0;
  }
  .pasteboard {
    flex: 1;
    display: flex;
    padding: 0 276px 0 267px;
    background: #cfcfcf;
  }
  .stage {
    flex: 1;
    min-width: 0;
    padding: 56px 0 0 76px;
    background: #fff;
  }
  .shape-text {
    display: inline-block;
    font: 700 60px/80px "Noto Sans CJK SC", sans-serif;
    color: transparent;
    background:
      radial-gradient(circle, #4b9cff 1px, transparent 1px) 0 0 / 4px 4px,
      radial-gradient(circle, #4b9cff 1px, transparent 1px) 2px 2px / 4px 4px,
      #0a5ce0;
    background-clip: text;
  }
  .stage-thumb {
    height: 53px;
    margin: auto 0;
    top: -10px;
  }
  .hscroll {
    display: flex;
    align-items: center;
    height: 17px;
    flex: none;
    padding: 0 23px 0 0;
    background: #efefef;
    color: #333;
  }
  .hscroll .tri:first-child {
    margin-left: -3px;
  }
  .hthumb {
    width: 603px;
    height: 15px;
    margin: 0 auto 0 335px;
    border: 1px solid #999;
    border-radius: 2px;
    background:
      repeating-linear-gradient(90deg, #666 0 1px, transparent 1px 3px) center / 8px 7px no-repeat,
      linear-gradient(#fafafa, #cacaca);
  }
  .splitter {
    display: flex;
    justify-content: center;
    height: 7px;
    flex: none;
    padding-right: 8px;
    background: linear-gradient(#888 1px, #b5b5b5 1px);
  }
  .splitter button {
    width: 48px;
    height: 7px;
    display: flex;
    justify-content: center;
    background: #efefef;
  }

  /* black panel headers */
  .panel-bar {
    display: flex;
    align-items: center;
    flex: none;
    height: 19px;
    border: 1px solid #aaa;
    border-width: 1px 0;
    background: linear-gradient(#000 11px, #555);
    color: #fff;
    white-space: nowrap;
  }
  .panel-bar .tri {
    transform-origin: center;
  }
  .actions-bar {
    height: 20px;
    padding: 1px 0 0 7px;
  }
  .actions-bar span {
    margin-left: 5px;
  }
  .dock-bar {
    margin-top: 1px;
    padding-left: 14px;
  }
  .first-bar {
    margin-top: 0;
  }
  .dock-bar span {
    margin-left: 5px;
  }
  .prop-bar {
    height: 20px;
    padding-left: 7px;
    align-items: stretch;
  }
  .prop-bar .tri {
    align-self: center;
  }
  .prop-bar i {
    width: 1px;
    height: 12px;
    margin: 4px 7px 0 8px;
    background: #ccc;
  }
  .prop-tab {
    width: 41px;
    margin: 1px 7px -1px 7px;
    padding-right: 5px;
    background: #efefef;
    color: #111;
    clip-path: polygon(0 0, 33px 0, 36px 2px, 100% 100%, 0 100%);
  }
  .prop-menu {
    display: flex;
    align-items: center;
    margin-left: auto;
    padding-right: 4px;
    color: #bbb;
  }

  /* property inspector */
  .properties {
    flex: none;
    margin-top: 1px;
    border-right: 1px solid #666;
  }
  .prop-body {
    position: relative;
    display: grid;
    grid-template-columns: 162px 225px minmax(0, 1fr);
    grid-template-rows: 60px 54px;
    background: #efefef;
  }
  .prop-cell {
    position: relative;
    padding-top: 6px;
    border-bottom: 1px solid #999;
  }
  .prop-cell:nth-child(n + 4) {
    padding-top: 5px;
    border-bottom: 0;
  }
  .prop-cell:not(.sound-cell)::after {
    content: "";
    position: absolute;
    top: 5px;
    right: -1px;
    bottom: 0;
    width: 2px;
    background: #999;
  }
  .prop-cell:nth-child(n + 4):not(.sound-cell)::after {
    top: 0;
    bottom: 4px;
  }
  .frame-cell {
    display: flex;
    align-items: flex-start;
  }
  .stack {
    display: flex;
    flex-direction: column;
    gap: 7px;
    padding: 5px 0 0 19px;
  }
  input {
    height: 20px;
    padding: 0 2px;
    border: 1px solid #d8d8d8;
    background: #fff;
    min-width: 0;
  }
  .frame-label {
    width: 101px;
    color: #888;
    text-align: center;
  }
  .tween-cell {
    padding-left: 15px;
  }
  .sound-cell {
    padding-left: 12px;
  }
  .line {
    display: flex;
    align-items: center;
    gap: 4px;
    margin-bottom: 6px;
    white-space: nowrap;
  }
  .line label {
    width: 28px;
  }
  .ease {
    width: 44px;
  }
  .step {
    display: flex;
    align-items: center;
    justify-content: center;
    width: 12px;
    height: 20px;
    margin-left: -3px;
    border: 1px solid #555;
    background: #ddd;
  }
  .edit {
    width: 48px;
    height: 19px;
    border: 1px solid #aaa;
    border-radius: 3px;
  }
  .loops {
    width: 41px;
  }
  .type-cell {
    display: flex;
    flex-direction: column;
    gap: 4px;
    padding-left: 53px;
  }
  .type-cell label {
    margin: 3px 0 0 1px;
  }
  p {
    margin: 0 0 0 32px;
  }
  .prop-icons {
    position: absolute;
    top: 3px;
    right: 4px;
    bottom: 4px;
    display: flex;
    flex-direction: column;
    align-items: center;
    gap: 4px;
  }
  .a11y {
    margin-top: auto;
  }
  .expand {
    margin-top: 24px;
  }

  /* docked panels */
  .info-tabs {
    display: flex;
    height: 19px;
    flex: none;
    padding: 1px 0 0 7px;
    background: #b4b4b4;
    color: #fff;
  }
  .info-tabs .on {
    width: 42px;
    margin: 1px 6px 0 7px;
    padding-right: 5px;
    background: #efefef;
    color: #111;
    clip-path: polygon(0 0, 32px 0, 35px 2px, 100% 100%, 0 100%);
  }
  .info-size {
    display: flex;
    align-items: center;
    height: 50px;
    flex: none;
    padding-left: 10px;
    border-bottom: 1px solid #999;
  }
  .fields {
    display: grid;
    grid-template-columns: 18px 44px;
    align-items: center;
    gap: 1px;
    margin-left: 12px;
  }
  .anchor {
    margin-left: 15px;
  }
  .info-color {
    display: flex;
    align-items: center;
    height: 82px;
    flex: none;
    padding: 0 0 18px 6px;
    border-top: 1px solid #fff;
  }
  dl {
    display: grid;
    grid-template-columns: 27px 10px;
    gap: 0 4px;
    margin: 0 auto 0 6px;
    line-height: 13px;
  }
  dt {
    text-align: right;
  }
  dd {
    margin: 0;
  }
  .cross {
    margin-right: -6px;
  }
  .lib-select {
    flex: none;
    padding: 6px 0 3px 4px;
  }
  .lib-select .drop {
    width: 150px;
  }
  .lib-count {
    flex: none;
    height: 20px;
    padding: 1px 5px;
    border-top: 1px solid #bbb;
    border-bottom: 1px solid #fff;
  }
  .preview {
    flex: none;
    height: 88px;
    border: 1px solid #888;
    border-width: 1px 0 0 1px;
    background: #bfbfbf;
  }
  .lib-head {
    flex: none;
    height: 18px;
    margin-top: 5px;
    padding-left: 4px;
    border-top: 1px solid #ccc;
    border-bottom: 1px solid #555;
  }
  .lib-list {
    flex: 1;
    min-height: 0;
    margin: 0;
    padding: 0;
    overflow: hidden;
    background: #fff;
    list-style: none;
  }
  .lib-list li {
    display: flex;
    align-items: center;
    gap: 8px;
    height: 20px;
    padding-left: 2px;
    white-space: nowrap;
  }
  .lib-list .selected {
    background: #efefef;
  }
  .lib-foot {
    display: flex;
    align-items: center;
    gap: 3px;
    height: 19px;
    flex: none;
    padding-left: 2px;
  }
  .lib-foot .lib-trash {
    margin: 0 2px 0 16px;
    color: #aaa;
  }
  .lib-thumb {
    flex: none;
    width: 21px;
    height: 14px;
    margin-left: 3px;
    border: 1px solid #888;
    border-radius: 2px;
    background:
      repeating-linear-gradient(90deg, #555 0 1px, transparent 1px 3px) center / 8px 6px no-repeat,
      linear-gradient(#fafafa, #cacaca);
  }

  /* test-movie window */
  .movie {
    position: absolute;
    top: 222px;
    left: 439px;
    display: flex;
    flex-direction: column;
    width: 562px;
    height: 453px;
    padding: 0 4px 4px;
    border: 1px solid #111;
    border-radius: 6px 6px 1px 1px;
    background: linear-gradient(#94b2d4, #b2cbe6 26px, #b9d1ea);
    box-shadow: inset 0 0 0 1px #d8f0fb;
  }
  .movie-title {
    display: flex;
    align-items: center;
    gap: 2px;
    height: 26px;
  }
  .movie-title h2 {
    margin: 0 auto 0 2px;
  }
  .close {
    border-color: #4d1d1d;
    background: linear-gradient(#e3a08f 45%, #c4432a 50%, #d87b56);
  }
  .movie-menu {
    display: flex;
    gap: 15px;
    height: 19px;
    flex: none;
    padding: 0 0 1px 6px;
    background: linear-gradient(#fafbfe, #e5eaf6 40%, #d5dcee 45%, #dfe6f5);
  }
  .movie-stage {
    position: relative;
    flex: 1;
    padding: 42px 56px;
    border: 1px solid #777;
    border-top-width: 2px;
    border-bottom-color: #eee;
    border-right-color: #eee;
    background: #fff;
    color: #0a66f5;
    font: 700 43px/60px "Noto Sans CJK SC", sans-serif;
  }
  .cursor {
    position: absolute;
    top: 244px;
    left: 127px;
  }

  /* input-method bar */
  .ime {
    position: absolute;
    top: 812px;
    right: 0;
    left: calc(100% - 172px);
    display: flex;
    align-items: center;
    gap: 8px;
    height: 24px;
    padding-left: 7px;
    border: 1px solid #b9cbd9;
    border-right: 0;
    background: #fff;
    fill: #1e6fc0;
    color: #1e6fc0;
  }
  .ime button {
    flex: none;
  }
  .sogou {
    position: absolute;
    left: -27px;
    top: -4px;
  }
  .zh {
    font-size: 15px;
    font-weight: 700;
  }
</style>
